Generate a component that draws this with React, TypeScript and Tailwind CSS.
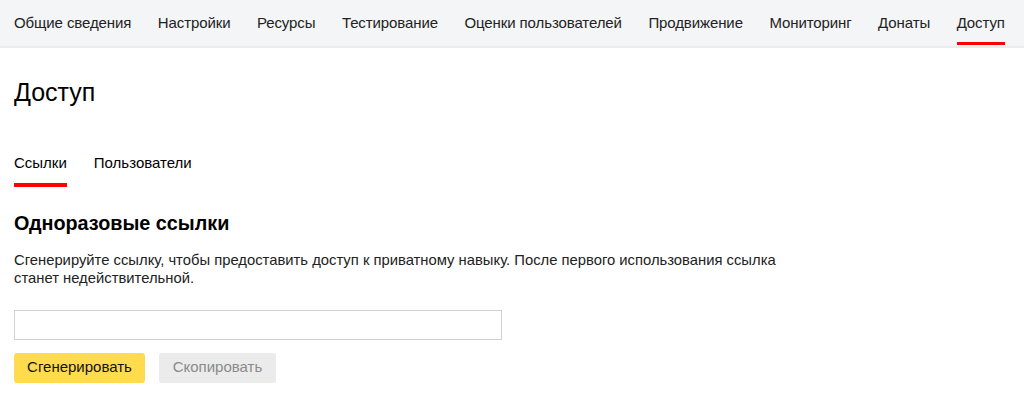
import React, { useState } from 'react';

const navItems = [
  'Общие сведения',
  'Настройки',
  'Ресурсы',
  'Тестирование',
  'Оценки пользователей',
  'Продвижение',
  'Мониторинг',
  'Донаты',
  'Доступ',
];

const App: React.FC = () => {
  const [tab, setTab] = useState('links');
  const [link, setLink] = useState('');

  return (
    <div className="min-h-screen bg-white text-black" style={{ fontFamily: '"Liberation Sans", Arial, sans-serif' }}>
      {/* Top navigation */}
      <div className="flex h-[48px] gap-[26.5px] overflow-hidden border-b-2 border-[#ebecee] bg-[#f4f5f7] px-[14px]">
        {navItems.map(item => (
          <div key={item} className="relative flex shrink-0 items-center whitespace-nowrap text-[15px] tracking-[-0.1px] text-[#222]">
            {item}
            {item === 'Доступ' && (
              <div className="absolute bottom-[1px] left-0 right-0 h-[3px] bg-[#ff0000]"></div>
            )}
          </div>
        ))}
      </div>

      <div className="px-[14px]">
        <h1 className="mt-[29px] text-[25px] leading-[30px]">Доступ</h1>

        {/* Sub tabs */}
        <div className="mt-[44px] flex gap-[27px] text-[15px]">
          <button
            onClick={() => setTab('links')}
            className="relative pb-[12px] pt-[1px]"
          >
            Ссылки
            {tab === 'links' && <div className="absolute bottom-0 left-0 right-0 h-[4px] bg-[#ff0000]"></div>}
          </button>
          <button
            onClick={() => setTab('users')}
            className="relative pb-[12px] pt-[1px]"
          >
            Пользователи
            {tab === 'users' && <div className="absolute bottom-0 left-0 right-0 h-[4px] bg-[#ff0000]"></div>}
          </button>
        </div>

        <h2 className="mt-[24px] text-[19.8px] font-bold leading-[24px]">Одноразовые ссылки</h2>
        <p className="mt-[16px] max-w-[770px] text-[14.8px] leading-[18px] text-[#222]">
          Сгенерируйте ссылку, чтобы предоставить доступ к приватному навыку. После первого использования ссылка станет недействительной.
        </p>

        <input
          value={link}
          onChange={e => setLink(e.target.value)}
          className="mt-[23px] block h-[30px] w-[488px] border border-[#d0d0d0] px-2 text-[14px] outline-none"
        />

        <div className="mt-[13px] flex gap-[14px]">
          <button
            onClick={() => setLink('https://dialogs.yandex.ru/share?secret=' + Math.random().toString(36).slice(2))}
            className="h-[30px] w-[131px] rounded-[3px] bg-[#ffdb4d] text-[15px] text-[#111]"
          >
            Сгенерировать
          </button>
          <button
            disabled={!link}
            className="h-[30px] w-[117px] rounded-[3px] bg-[#ebebeb] text-[15px] text-[#8a8a8a]"
          >
            Скопировать
          </button>
        </div>
      </div>
    </div>
  );
};

export default App;
